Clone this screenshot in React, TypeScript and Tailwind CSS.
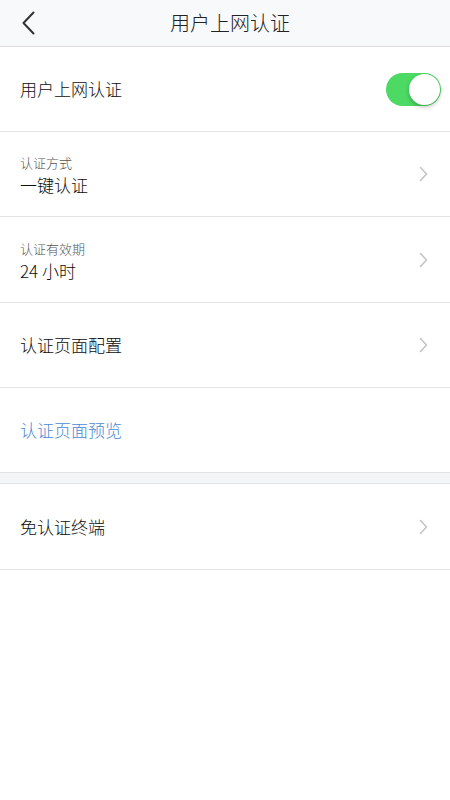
import React from "react";

const font = { fontFamily: '"Noto Sans CJK SC", "Noto Sans", sans-serif' };

const Chevron = () => (
    <svg width="9" height="16" viewBox="0 0 9 16" fill="none" className="shrink-0">
        <path d="M1.5 1.5L7.5 8L1.5 14.5" stroke="#c4c4c8" strokeWidth="1.6" strokeLinecap="round" strokeLinejoin="round"/>
    </svg>
);

const Row = ({children, arrow = true, h = "h-[85px]", pad = ""}: {children: React.ReactNode; arrow?: boolean; h?: string; pad?: string}) => (
    <div className={`${h} flex items-center justify-between pl-5 pr-[22px] border-b border-[#e3e3e5] bg-white`}>
        <div className={`flex flex-col ${pad}`}>{children}</div>
        {arrow && <Chevron/>}
    </div>
);

const App = () => {
    return (
        <div className="w-[450px] h-[800px] bg-white text-[#0d0d0d] font-light" style={font}>
            <div className="h-[47px] bg-[#f8f9fb] border-b border-[#dcdcde] flex items-center relative">
                <div className="w-12 h-full flex items-center pl-[22px]">
                    <svg width="13" height="24" viewBox="0 0 13 24" fill="none">
                        <path d="M11.5 1.5L1.5 12L11.5 22.5" stroke="#333" strokeWidth="2" strokeLinecap="round" strokeLinejoin="round"/>
                    </svg>
                </div>
                <div className="absolute left-[10px] right-0 text-center text-[20px] text-[#222] leading-none">用户上网认证</div>
            </div>

            <div className="h-[85px] flex items-center justify-between pl-5 pr-[9px] border-b border-[#e3e3e5]">
                <span className="text-[17px]">用户上网认证</span>
                <div className="w-[55px] h-[33px] rounded-full bg-[#4cd964] relative">
                    <div className="absolute right-[1px] top-[1px] w-[31px] h-[31px] rounded-full bg-white shadow-[0_2px_4px_rgba(0,0,0,0.25)]"/>
                </div>
            </div>

            <Row pad="pt-1">
                <span className="text-[13px] text-[#555] leading-[18px]">认证方式</span>
                <span className="text-[17px] leading-[26px]">一键认证</span>
            </Row>
            <Row h="h-[86px]" pad="pt-1">
                <span className="text-[13px] text-[#555] leading-[18px]">认证有效期</span>
                <span className="text-[17px] leading-[26px]">24 小时</span>
            </Row>
            <Row>
                <span className="text-[17px]">认证页面配置</span>
            </Row>
            <Row arrow={false}>
                <span className="text-[17px] text-[#4a8bd6]">认证页面预览</span>
            </Row>

            <div className="h-[11px] bg-[#f4f5f7] border-b border-[#e3e3e5]"/>

            <Row h="h-[86px]">
                <span className="text-[17px]">免认证终端</span>
            </Row>
        </div>
    );
};

export default App;
